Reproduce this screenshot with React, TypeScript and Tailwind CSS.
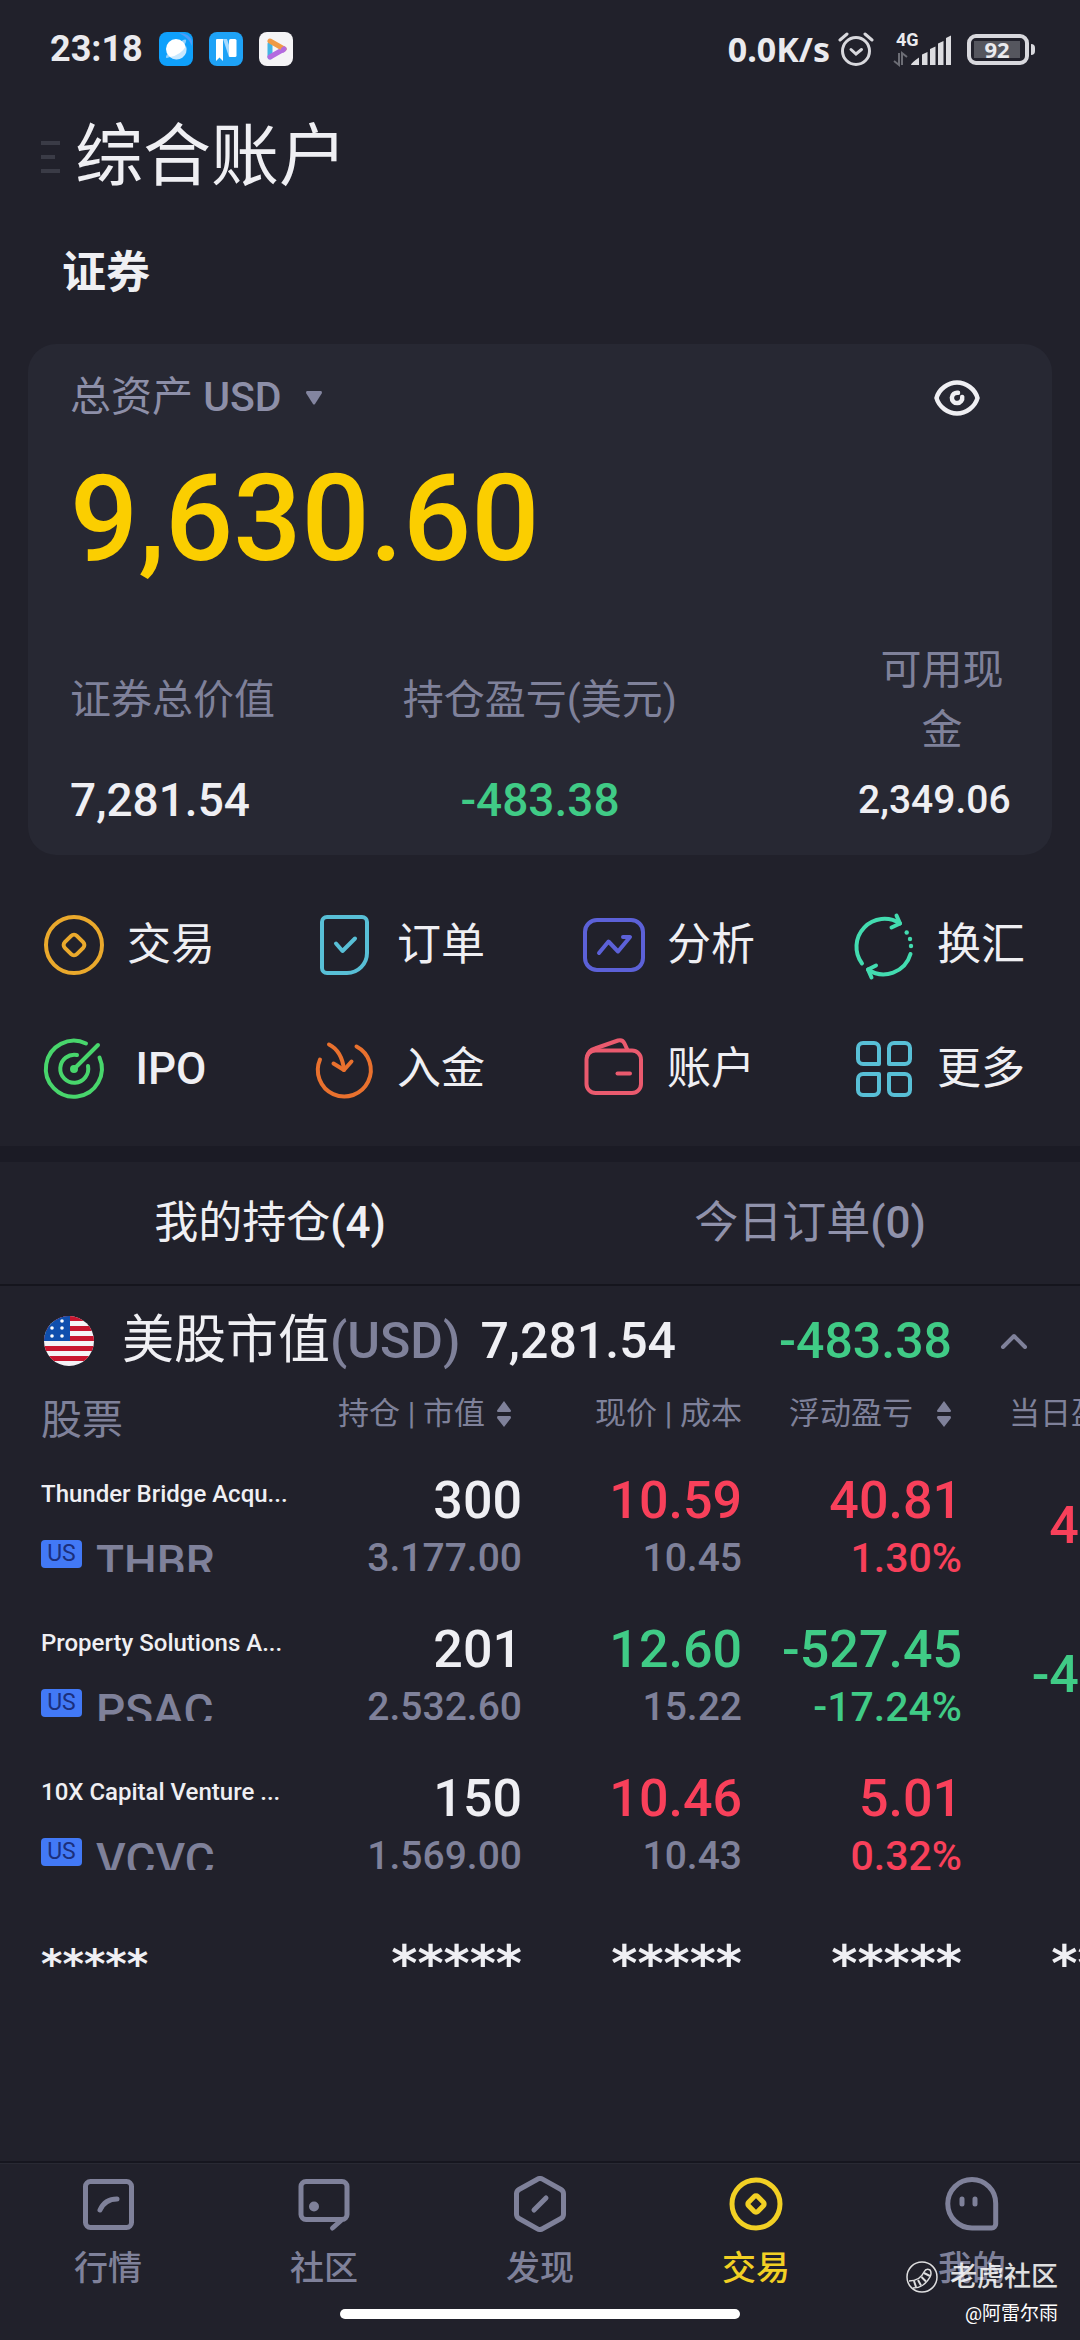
import type { ReactNode } from 'react'

type Tone = 'up' | 'down'

const toneClass: Record<Tone, string> = {
  up: 'text-[#f8405a]',
  down: 'text-[#40cb86]',
}

const holdings: {
  name: string
  symbol: string
  qty: string
  value: string
  price: string
  cost: string
  priceTone: Tone
  pnl: string
  pnlPct: string
  pnlTone: Tone
  day: string
  dayTone: Tone
}[] = [
  { name: 'Thunder Bridge Acqu...', symbol: 'THBR', qty: '300', value: '3.177.00', price: '10.59', cost: '10.45', priceTone: 'up', pnl: '40.81', pnlPct: '1.30%', pnlTone: 'up', day: '40.81', dayTone: 'up' },
  { name: 'Property Solutions A...', symbol: 'PSAC', qty: '201', value: '2.532.60', price: '12.60', cost: '15.22', priceTone: 'down', pnl: '-527.45', pnlPct: '-17.24%', pnlTone: 'down', day: '-46.23', dayTone: 'down' },
  { name: '10X Capital Venture ...', symbol: 'VCVC', qty: '150', value: '1.569.00', price: '10.46', cost: '10.43', priceTone: 'up', pnl: '5.01', pnlPct: '0.32%', pnlTone: 'up', day: '5.01', dayTone: 'up' },
]

function ActionIcon({ color, children }: { color: string; children: ReactNode }) {
  return (
    <svg viewBox="0 0 64 64" className="size-16 shrink-0 overflow-visible" fill="none" stroke={color} strokeWidth="4" strokeLinecap="round" strokeLinejoin="round" aria-hidden="true">
      {children}
    </svg>
  )
}

const actions = [
  {
    label: '交易',
    icon: (
      <ActionIcon color="#eaa92c">
        <circle cx="32" cy="32" r="28" />
        <rect x="23.5" y="23.5" width="17" height="17" rx="4" transform="rotate(45 32 32)" />
      </ActionIcon>
    ),
  },
  {
    label: '订单',
    icon: (
      <ActionIcon color="#58bfd6">
        <path d="M15 4h35a5 5 0 0 1 5 5v31a20 20 0 0 1-20 20H15a5 5 0 0 1-5-5V9a5 5 0 0 1 5-5z" />
        <path d="M24 30.5L30.5 38L43 25.5" />
      </ActionIcon>
    ),
  },
  {
    label: '分析',
    icon: (
      <ActionIcon color="#5c61d8">
        <rect x="3" y="7" width="58" height="50" rx="12" />
        <path d="M17 40L26.5 28.5L36 38.5L48 24H41" />
      </ActionIcon>
    ),
  },
  {
    label: '换汇',
    icon: (
      <ActionIcon color="#43dcb0">
        <path d="M10 50.5A28 28 0 0 1 48 10.5" />
        <path d="M44.5 2.5L48 10.5L39.5 14.5" />
        <path d="M58.5 41A28 28 0 0 1 16 56.5" />
        <path d="M24 52.5L16 56.5L19.5 64.5" />
        <g fill="#43dcb0" stroke="none">
          <circle cx="54.7" cy="19.5" r="2.2" />
          <circle cx="58" cy="26" r="2.2" />
          <circle cx="59" cy="33" r="2.2" />
        </g>
      </ActionIcon>
    ),
  },
  {
    label: 'IPO',
    icon: (
      <ActionIcon color="#48d66c">
        <path d="M44 6.5A28 28 0 1 0 57.5 20.5" />
        <path d="M35 18A14 14 0 1 0 46 29" />
        <path d="M32 32L56 8" />
        <circle cx="32" cy="32" r="2" />
      </ActionIcon>
    ),
  },
  {
    label: '入金',
    icon: (
      <ActionIcon color="#e9712e">
        <path d="M44.5 9.5A26.5 26.5 0 1 1 8 22.5" />
        <path d="M17 7.5Q30 14 32 33" />
        <path d="M21.5 26.5L32 33L39.5 24.5" />
      </ActionIcon>
    ),
  },
  {
    label: '账户',
    icon: (
      <ActionIcon color="#ea5a6e">
        <rect x="4.5" y="13.5" width="54.5" height="42.5" rx="9" />
        <path d="M5 20Q6 13.500 13 11.500L36 3.500Q40.500 2.200 42.500 6.500L45.500 13" />
        <path d="M35.500 36.500H48" />
      </ActionIcon>
    ),
  },
  {
    label: '更多',
    icon: (
      <ActionIcon color="#58bfd6">
        {[0, 90, 180, 270].map((deg) => (
          <path key={deg} d="M27 27H11a5 5 0 0 1-5-5V11a5 5 0 0 1 5-5h11a5 5 0 0 1 5 5z" transform={`rotate(${deg} 32 32)`} />
        ))}
      </ActionIcon>
    ),
  },
]

function NavIcon({ children }: { children: ReactNode }) {
  return (
    <svg viewBox="0 0 56 56" className="size-14" fill="none" stroke="currentColor" strokeWidth="5" strokeLinecap="round" strokeLinejoin="round" aria-hidden="true">
      {children}
    </svg>
  )
}

const navItems = [
  {
    label: '行情',
    icon: (
      <NavIcon>
        <rect x="5.5" y="5.5" width="46" height="46" rx="5" />
        <path d="M20 34Q25 23 37 23" />
      </NavIcon>
    ),
  },
  {
    label: '社区',
    icon: (
      <NavIcon>
        <rect x="5" y="5.5" width="46" height="38" rx="5" />
        <path d="M45 44.500L36.500 52" />
        <circle cx="18" cy="30.5" r="5" fill="currentColor" stroke="none" />
      </NavIcon>
    ),
  },
  {
    label: '发现',
    icon: (
      <NavIcon>
        <path d="M25.500 3.200a5 5 0 0 1 5 0L49 13.500a5 5 0 0 1 2.500 4.300V38.200a5 5 0 0 1-2.500 4.300L30.500 52.800a5 5 0 0 1-5 0L7 42.500a5 5 0 0 1-2.500-4.300V17.800a5 5 0 0 1 2.500-4.300z" />
        <path d="M22 34L34 22" />
      </NavIcon>
    ),
  },
  {
    label: '交易',
    active: true,
    icon: (
      <NavIcon>
        <circle cx="28" cy="28" r="24" />
        <rect x="21.5" y="21.5" width="13" height="13" rx="2.5" transform="rotate(45 28 28)" />
      </NavIcon>
    ),
  },
  {
    label: '我的',
    icon: (
      <NavIcon>
        <path d="M28 3.500A23.700 23.700 0 0 1 51.700 27.500V48a4 4 0 0 1-4 4H28A24.200 24.200 0 0 1 28 3.500z" />
        <path d="M18 23v5M31 23v5" />
      </NavIcon>
    ),
  },
]

function SortIcon() {
  return (
    <svg viewBox="0 0 14 26" className="h-[26px] w-3.5 shrink-0" fill="#7f819a" aria-hidden="true">
      <path d="M7 0L14 9.500Q14 11 13 11H1Q0 11 0 9.500zM7 26L0 17Q0 15 1 15H13Q14 15 14 17z" />
    </svg>
  )
}

function StatusBar() {
  return (
    <header className="flex h-[98px] items-center justify-between pr-[45px] pl-[50px] text-[#eaeaee]">
      <div className="flex items-center gap-4">
        <span className="text-[36px] font-bold">23:18</span>
        <svg viewBox="0 0 34 34" className="size-[34px]" aria-hidden="true">
          <rect width="34" height="34" rx="8" fill="#0fa0fb" />
          <path d="M20 1q10 0 13 8v5q-3-8-13-13z" fill="#4f9df8" />
          <path d="M8 26q-3 0 2-6L24 8q5-2 2 4L14 24z" fill="#8fd0fd" />
          <circle cx="17" cy="17" r="10" fill="#fff" />
          <path d="M27 14A10 10 0 0 1 11 25Q22 23 27 14z" fill="#c9e8fe" />
        </svg>
        <svg viewBox="0 0 34 34" className="size-[34px]" aria-hidden="true">
          <rect width="34" height="34" rx="8" fill="#1ea2f6" />
          <path d="M14 7h4l6 18h-4z" fill="#a5daff" />
          <path d="M7 8q0-1 1-1h6v22l-3.500-3.500L7 29z" fill="#fff" />
          <rect x="20" y="7" width="7.500" height="18" rx="1.500" fill="#fff" />
        </svg>
        <svg viewBox="0 0 34 34" className="size-[34px]" fill="none" strokeWidth="5" strokeLinecap="round" aria-hidden="true">
          <rect width="34" height="34" rx="8" fill="#f5f4f6" />
          <path d="M11 25V12" stroke="#43b5e4" />
          <path d="M11 25L25 17" stroke="#b36ae0" />
          <path d="M11 9L25 17" stroke="#f09a45" />
          <path d="M24 18L25 17" stroke="#b36ae0" />
        </svg>
      </div>
      <div className="flex items-center">
        <span className="font-['Noto_Sans',sans-serif] text-[34px] leading-[44px] font-bold">0.0K/s</span>
        <svg viewBox="0 0 36 36" className="ml-2 size-9" fill="none" stroke="#d8d8dd" strokeWidth="3" strokeLinecap="round" aria-hidden="true">
          <circle cx="18" cy="20" r="13.500" />
          <path d="M13 18.500L18 23L23.500 18.500" />
          <path d="M2 9L9 3M34 9L27 3" />
        </svg>
        <div className="ml-5 flex flex-col">
          <span className="pl-0.5 text-[18px] leading-[14px] font-bold">4G</span>
          <svg viewBox="0 0 57 18" className="h-[18px] w-[57px] overflow-visible" aria-hidden="true">
            <path d="M5 6v12l-5-4M8 18V6l5 4" stroke="#6c6d75" strokeWidth="2" fill="none" />
            <path d="M17 18q0-2 8-7.500V18zM28 7.500l5.500-2.500V18H28zM36 2l5.500-2.500V18H36zM44-3.500l5.500-2.500V18H44zM52-9l5-2.500V18h-5z" fill="#dcdce0" />
          </svg>
        </div>
        <div className="ml-4 flex items-center gap-0.5">
          <div className="h-[31px] w-[62px] rounded-[9px] border-4 border-[#d8d8dd] p-[3px]">
            <div className="flex h-full w-[46px] items-center justify-center bg-[#55565e] font-['Noto_Sans',sans-serif] text-[22px] leading-4 font-bold">92</div>
          </div>
          <div className="h-[11px] w-1 rounded-r-sm bg-[#d8d8dd]" />
        </div>
      </div>
    </header>
  )
}

function AssetCard() {
  return (
    <section className="mx-7 mt-3.5 rounded-[28px] bg-[#272833] px-[42px] pb-[15px]">
      <div className="flex h-[108px] items-center justify-between">
        <button className="flex items-center gap-6 text-[41px] text-[#8d8fa8]">
          <span>总资产 <span className="font-medium">USD</span></span>
          <svg viewBox="0 0 16 14" className="h-3.5 w-4" fill="#8385a0" aria-hidden="true">
            <path d="M1 0H15Q16 0 16 2L9 13Q8 14 7 13L0 2Q0 0 1 0z" />
          </svg>
        </button>
        <button aria-label="显示资产" className="mr-[30px]">
          <svg viewBox="0 0 46 36" className="h-9 w-[46px]" fill="none" stroke="#efeff3" strokeWidth="4.500" strokeLinecap="round" aria-hidden="true">
            <path d="M2.500 18C5 9 14 2.500 23 2.500S41 9 43.500 18C41 27 32 33.500 23 33.500S5 27 2.500 18z" />
            <path d="M24 12.800A5.200 5.200 0 1 0 28.200 17" />
          </svg>
        </button>
      </div>
      <div className="text-[120px] leading-[134px] font-medium text-[#fbce00]">9,630.60</div>
      <div className="mt-[54px] grid grid-cols-3">
        <div className="flex flex-col">
          <div className="flex flex-1 items-center text-[41px] leading-[60px] text-[#7f819a]">证券总价值</div>
          <div className="text-[46px] leading-[80px] font-medium text-[#efeff3]">7,281.54</div>
        </div>
        <div className="flex flex-col items-center">
          <div className="flex flex-1 items-center text-[41px] leading-[60px] text-[#7f819a]">持仓盈亏(美元)</div>
          <div className="text-[46px] leading-[80px] font-medium text-[#40cb86]">-483.38</div>
        </div>
        <div className="flex w-[152px] flex-col justify-self-end">
          <div className="pl-4 text-center text-[41px] leading-[60px] text-[#7f819a]">可用现金</div>
          <div className="text-right text-[39px] leading-[80px] font-medium text-[#efeff3]">2,349.06</div>
        </div>
      </div>
    </section>
  )
}

function HoldingsTable() {
  return (
    <div className="overflow-hidden">
      <table className="w-[1182px] table-fixed border-collapse text-right">
        <colgroup>
          <col />
          <col className="w-[220px]" />
          <col className="w-[220px]" />
          <col className="w-[220px]" />
          <col className="w-[220px]" />
        </colgroup>
        <thead>
          <tr className="h-[55px] align-top text-[31px] leading-9 whitespace-nowrap text-[#7f819a]">
            <th className="pl-[41px] text-left text-[41px] leading-[48px] font-normal">股票</th>
            <th className="font-normal">
              <button className="inline-flex items-center gap-3 pr-[11px]">持仓 | 市值 <SortIcon /></button>
            </th>
            <th className="font-normal">现价 | 成本</th>
            <th className="font-normal">
              <button className="inline-flex items-center gap-6 pr-[11px]">浮动盈亏 <SortIcon /></button>
            </th>
            <th className="font-normal">
              <button className="inline-flex items-center gap-6 pr-[11px]">当日盈亏 <SortIcon /></button>
            </th>
          </tr>
        </thead>
        <tbody>
          {holdings.map((h) => (
            <tr key={h.symbol} className="h-[149px] align-top whitespace-nowrap">
              <td className="pt-[25px] pl-[41px] text-left">
                <div className="text-[24px] leading-9 font-medium text-[#efeff3]">{h.name}</div>
                <div className="mt-6 flex h-9 items-start gap-3.5 overflow-hidden">
                  <span className="mt-1 flex h-7 w-[41px] items-center justify-center rounded-sm bg-[#4279f6] text-[23px] text-[#1b2f7c]">US</span>
                  <span className="text-[46px] leading-[52px] font-medium text-[#7f819a]">{h.symbol}</span>
                </div>
              </td>
              <td className="pt-5">
                <div className="text-[52px] leading-[60px] font-medium text-[#efeff3]">{h.qty}</div>
                <div className="text-[39px] leading-[54px] font-medium text-[#7f819a]">{h.value}</div>
              </td>
              <td className="pt-5">
                <div className={`text-[52px] leading-[60px] font-medium ${toneClass[h.priceTone]}`}>{h.price}</div>
                <div className="text-[39px] leading-[54px] font-medium text-[#7f819a]">{h.cost}</div>
              </td>
              <td className={`pt-5 font-medium ${toneClass[h.pnlTone]}`}>
                <div className="text-[52px] leading-[60px]">{h.pnl}</div>
                <div className="text-[41px] leading-[54px]">{h.pnlPct}</div>
              </td>
              <td className={`align-middle text-[52px] leading-[60px] font-medium ${toneClass[h.dayTone]}`}>{h.day}</td>
            </tr>
          ))}
          <tr className="h-[149px] font-['DejaVu_Sans',sans-serif] text-[50px] font-bold text-[#efeff3]">
            <td className="pb-4 pl-[41px] text-left text-[41px]">*****</td>
            <td className="pb-4">*****</td>
            <td className="pb-4">*****</td>
            <td className="pb-4">*****</td>
            <td className="pb-4">*****</td>
          </tr>
        </tbody>
      </table>
    </div>
  )
}

function BottomNav() {
  return (
    <nav className="relative mt-auto border-t-2 border-[#16161f]">
      <div className="grid h-[146px] grid-cols-5 border-t border-[#282933] pt-3">
        {navItems.map((item) => (
          <a
            key={item.label}
            href="#"
            className={`flex flex-col items-center gap-3 text-[34px] leading-[48px] font-medium ${item.active ? 'text-[#f2d024]' : 'text-[#7f819a]'}`}
          >
            {item.icon}
            {item.label}
          </a>
        ))}
      </div>
      <div className="mx-auto mb-[21px] h-2.5 w-[400px] rounded-full bg-white" />
      {/* community watermark */}
      <div className="absolute right-[22px] bottom-3 flex flex-col items-end gap-1 text-white">
        <div className="flex items-center gap-3 text-[27px] leading-[38px] font-medium opacity-85">
          <svg viewBox="0 0 32 32" className="size-8" fill="none" stroke="#fff" strokeWidth="1.500" aria-hidden="true">
            <circle cx="16" cy="16" r="15" />
            <path d="M3 20Q14 20 18 11Q20 7 24 9Q26 12 24 16Q18 27 7 27" />
            <path d="M8 20L10 26M12 19L15 24.500M15.500 16L20 20.500M18 12L24 15" strokeWidth="2" />
          </svg>
          老虎社区
        </div>
        <div className="text-[19px] leading-7">@阿雷尔雨</div>
      </div>
    </nav>
  )
}

export default function App() {
  return (
    <div className="flex min-h-screen flex-col bg-[#21212b] font-['Roboto','Noto_Sans_CJK_SC',sans-serif] text-[#efeff3]">
      <StatusBar />
      <div className="flex h-[118px] items-center gap-[15px] pl-[41px]">
        <button aria-label="菜单" className="flex flex-col gap-2.5">
          <span className="h-1 w-[19px] bg-[#3a3b46]" />
          <span className="h-1 w-3.5 bg-[#3a3b46]" />
          <span className="h-1 w-[19px] bg-[#3a3b46]" />
        </button>
        <h1 className="text-[68px] leading-[80px]">综合账户</h1>
      </div>
      <h2 className="flex h-[114px] items-center pl-[62px] text-[44px] font-bold">证券</h2>
      <AssetCard />

      <section className="grid grid-cols-4 pt-7 pb-[15px]">
        {actions.map((a) => (
          <button key={a.label} className="flex h-[124px] items-center gap-[21px] pl-[42px] text-[44px]">
            {a.icon}
            <span className={`min-w-[88px] text-center ${a.label === 'IPO' ? 'font-medium' : 'font-normal'}`}>{a.label}</span>
          </button>
        ))}
      </section>

      <div className="h-4 bg-[#1b1b25]" />

      <div className="grid h-[124px] grid-cols-2 border-b-2 border-[#15151d] text-[44px]">
        <button className="text-[#efeff3]">我的持仓<span className="font-medium">(4)</span></button>
        <button className="text-[#9092ab]">今日订单<span className="font-medium">(0)</span></button>
      </div>

      <section>
        <div className="flex h-[110px] items-center pr-[52px] pl-11 text-[50px] font-medium">
          <svg viewBox="0 0 50 50" className="size-[50px]" aria-hidden="true">
            <clipPath id="flag">
              <circle cx="25" cy="25" r="25" />
            </clipPath>
            <g clipPath="url(#flag)">
              <rect width="50" height="50" fill="#f5f3f6" />
              <path d="M0 0h50v5H0zM0 10h50v5H0zM0 20h50v5H0zM0 30h50v5H0zM0 40h50v5H0z" fill="#c9152f" />
              <rect width="26" height="25" fill="#0f4fae" />
              <g fill="#fff">
                <circle cx="18" cy="5" r="1.800" />
                <circle cx="8" cy="12" r="1.800" />
                <circle cx="18" cy="12" r="1.800" />
                <circle cx="8" cy="20" r="1.800" />
                <circle cx="18" cy="20" r="1.800" />
              </g>
            </g>
          </svg>
          <span className="ml-7 text-[52px] font-normal">美股市值</span>
          <span className="text-[#7f819a]">(USD)</span>
          <span className="ml-5">7,281.54</span>
          <span className="ml-auto text-[#40cb86]">-483.38</span>
          <button aria-label="收起" className="ml-12">
            <svg viewBox="0 0 28 16" className="h-4 w-7" fill="none" stroke="#7f819a" strokeWidth="4" strokeLinecap="round" strokeLinejoin="round" aria-hidden="true">
              <path d="M3 14L14 3L25 14" />
            </svg>
          </button>
        </div>
        <HoldingsTable />
      </section>
      <BottomNav />
    </div>
  )
}
